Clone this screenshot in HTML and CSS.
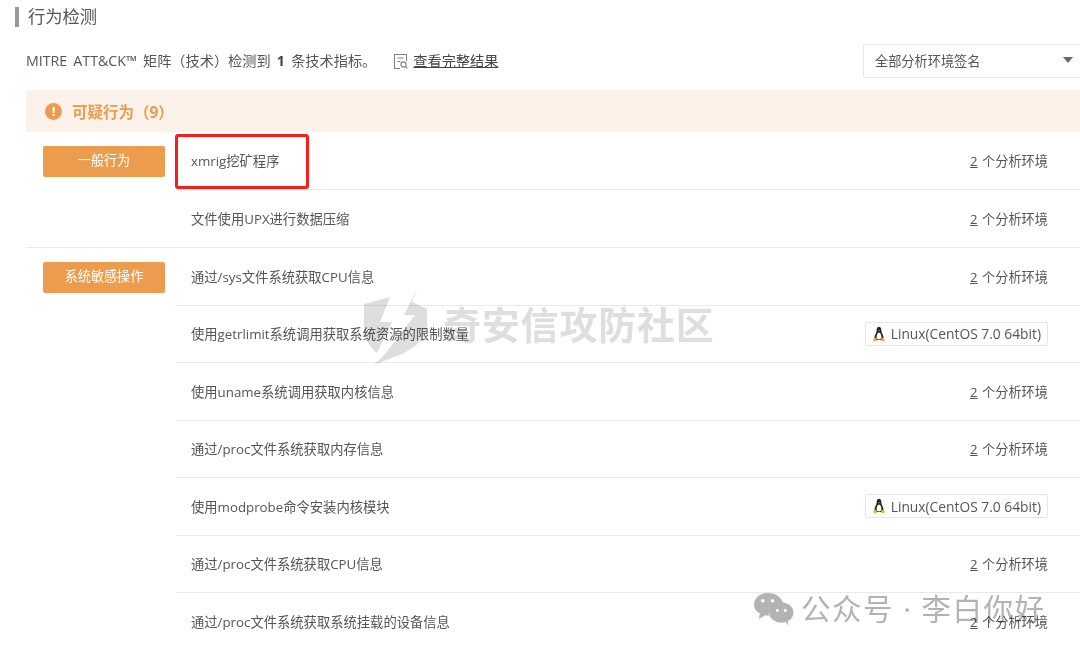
FILE: index.html
```html
<!DOCTYPE html>
<html lang="zh-CN">
<head>
<meta charset="utf-8">
<title>行为检测</title>
<link rel="stylesheet" href="styles.css">
</head>
<body>
<main class="page">
  <h1 class="title">行为检测</h1>
  <div class="summary">
    <p class="summary-text">MITRE ATT&amp;CK™ 矩阵（技术）检测到 <b>1</b> 条技术指标。</p>
    <svg class="doc-icon" viewBox="0 0 16 17" width="16" height="17" fill="none" stroke="#808080" stroke-width="1.100"><path d="M7 15.500H1.500v-14h12V8"/><path d="M4.500 5h6M4.500 8.500h3"/><circle cx="10.500" cy="11.500" r="2.600"/><path d="M12.400 13.400l2 2"/></svg>
    <a class="full-link">查看完整结果</a>
    <div class="select">全部分析环境签名<span class="caret"></span></div>
  </div>
  <div class="banner">
    <span class="alert-icon">!</span>
    <span class="banner-text">可疑行为（9）</span>
  </div>
  <section class="group">
    <div class="tag-cell"><span class="tag">一般行为</span></div>
    <div class="rows">
      <div class="row"><span>xmrig挖矿程序</span><span class="count"><u>2</u> 个分析环境</span></div>
      <div class="row"><span>文件使用UPX进行数据压缩</span><span class="count"><u>2</u> 个分析环境</span></div>
    </div>
  </section>
  <section class="group">
    <div class="tag-cell"><span class="tag">系统敏感操作</span></div>
    <div class="rows">
      <div class="row"><span>通过/sys文件系统获取CPU信息</span><span class="count"><u>2</u> 个分析环境</span></div>
      <div class="row"><span>使用getrlimit系统调用获取系统资源的限制数量</span>
        <span class="os"><svg class="tux" viewBox="0 0 14 16" width="14" height="16"><path d="M7 .8C5 .8 4.600 3 4.600 5 4.600 7 2.500 9 2.500 11.500c0 1 .5 2 1.500 2.500h6c1-.5 1.500-1.500 1.500-2.500C11.500 9 9.400 7 9.400 5 9.400 3 9 .8 7 .8z" fill="#222"/><path d="M7 6.500c-1.500 0-2.500 3-2.500 5 0 1 1 2 2.500 2s2.500-1 2.500-2c0-2-1-5-2.500-5z" fill="#fff"/><path d="M1 13.500l3-2 1.200 3-3 1zM13 13.500l-3-2-1.200 3 3 1zM6 4.300h2L7 5.500z" fill="#f2b01e"/></svg>Linux(CentOS 7.0 64bit)</span></div>
      <div class="row"><span>使用uname系统调用获取内核信息</span><span class="count"><u>2</u> 个分析环境</span></div>
      <div class="row"><span>通过/proc文件系统获取内存信息</span><span class="count"><u>2</u> 个分析环境</span></div>
      <div class="row"><span>使用modprobe命令安装内核模块</span>
        <span class="os"><svg class="tux" viewBox="0 0 14 16" width="14" height="16"><path d="M7 .8C5 .8 4.600 3 4.600 5 4.600 7 2.500 9 2.500 11.500c0 1 .5 2 1.500 2.500h6c1-.5 1.500-1.500 1.500-2.500C11.500 9 9.400 7 9.400 5 9.400 3 9 .8 7 .8z" fill="#222"/><path d="M7 6.500c-1.500 0-2.500 3-2.500 5 0 1 1 2 2.500 2s2.500-1 2.500-2c0-2-1-5-2.500-5z" fill="#fff"/><path d="M1 13.500l3-2 1.200 3-3 1zM13 13.500l-3-2-1.200 3 3 1zM6 4.300h2L7 5.500z" fill="#f2b01e"/></svg>Linux(CentOS 7.0 64bit)</span></div>
      <div class="row"><span>通过/proc文件系统获取CPU信息</span><span class="count"><u>2</u> 个分析环境</span></div>
      <div class="row"><span>通过/proc文件系统获取系统挂载的设备信息</span><span class="count"><u>2</u> 个分析环境</span></div>
    </div>
  </section>
</main>
<div class="highlight"></div>
<div class="wm-qianxin">
  <svg viewBox="0 0 80 90" width="80" height="90"><path d="M9 24L35 17 25 42H37L22 73C14 67 9 56 9 45Z" fill="#dedede"/><path d="M63 7L49 35H60L30 74 19 85 39 77C60 70 72 58 72 44V29L57 22Z" fill="#dedede"/></svg>
  <span>奇安信攻防社区</span>
</div>
<div class="wm-wechat">
  <svg viewBox="0 0 42 36" width="41" height="35"><path d="M15 1C7 1 1 6 1 13c0 4 2 7 6 9l-1 6 6-4c2 .5 2 .6 4 .6 0-8 6-13 15-13C29 5 23 1 15 1z" fill="#b3b3b3"/><ellipse cx="29" cy="21" rx="12.500" ry="10.500" fill="#b3b3b3"/><path d="M33 29l3 6 0-7z" fill="#b3b3b3"/><circle cx="10" cy="9" r="1.800" fill="#fff"/><circle cx="20" cy="9" r="1.800" fill="#fff"/><circle cx="25" cy="19" r="1.500" fill="#fff"/><circle cx="33" cy="19" r="1.500" fill="#fff"/></svg>
  <span>公众号 · 李白你好</span>
</div>
</body>
</html>
```

FILE: styles.css
```css
* { box-sizing: border-box; }
html, body { margin: 0; height: 650px; overflow: hidden; background: #fff; }
body {
  position: relative;
  font-family: "Open Sans", "Noto Sans CJK SC", sans-serif;
  font-size: 13.300px;
  color: #555;
  filter: blur(.3px);
}
.page { padding-left: 26px; }
.title {
  margin: 0 0 0 -11px;
  height: 34px;
  padding-left: 9px;
  border-left: 4px solid #999;
  border-image: linear-gradient(#fff 8px, #999 8px, #999 26px, #fff 26px) 1;
  font-size: 17.300px;
  font-weight: 400;
  line-height: 34px;
  color: #555;
}
.summary {
  display: flex;
  align-items: center;
  height: 34px;
  margin-top: 10px;
  font-size: 14.200px;
}
.summary-text { margin: 0; word-spacing: 2.500px; line-height: 34px; }
.summary-text b { color: #444; }
.doc-icon { margin-left: 17px; margin-right: 4px; }
.full-link { text-decoration: underline; color: #444; line-height: 34px; }
.select {
  display: flex;
  align-items: center;
  justify-content: space-between;
  margin-left: auto;
  width: 217px;
  height: 34px;
  padding: 0 7px 2px 11px;
  border: 1px solid #e6e6e6;
  border-right: 0;
  border-radius: 2px 0 0 2px;
  font-size: 13.200px;
}
.caret {
  width: 0;
  height: 0;
  border-left: 5px solid transparent;
  border-right: 5px solid transparent;
  border-top: 6px solid #666;
}
.banner {
  display: flex;
  align-items: center;
  gap: 10px;
  height: 42px;
  margin-top: 12px;
  padding-left: 19px;
  background: #fdf2e9;
  color: #ec9c4d;
}
.alert-icon {
  width: 17px;
  height: 17px;
  border-radius: 50%;
  background: #ec9c4d;
  color: #fff;
  font-size: 13px;
  font-weight: 700;
  line-height: 17px;
  text-align: center;
}
.banner-text { font-size: 15.500px; font-weight: 700; }
.group { display: flex; border-bottom: 1px solid #e9e9e9; }
.group:last-child { border-bottom: 0; }
.tag-cell { width: 150px; flex: none; padding: 13.500px 0 0 17px; }
.tag {
  display: block;
  width: 122px;
  height: 31px;
  border-radius: 2px;
  background: #ec9c4d;
  color: #fff;
  font-size: 13.100px;
  line-height: 29px;
  text-align: center;
}
.rows { flex: 1; }
.row {
  display: flex;
  align-items: center;
  justify-content: space-between;
  height: 57.500px;
  padding: 0 32px 0 15px;
  border-bottom: 1px solid #e9e9e9;
}
.rows .row:last-child { border-bottom: 0; }
.count { font-size: 13.200px; word-spacing: 1px; }
.os {
  display: flex;
  align-items: center;
  gap: 5px;
  height: 24px;
  padding: 0 6px;
  border: 1px solid #e6e6e6;
  border-radius: 2px;
  font-size: 13.800px;
}
.highlight {
  position: absolute;
  left: 175px;
  top: 134px;
  width: 134px;
  height: 55px;
  border: 3px solid #f5201c;
  border-radius: 3px;
}
.wm-qianxin {
  position: absolute;
  left: 355px;
  top: 280px;
  display: flex;
  align-items: flex-start;
  gap: 8px;
  mix-blend-mode: multiply;
}
.wm-qianxin span {
  margin-top: 15px;
  font-size: 38px;
  font-weight: 700;
  letter-spacing: .8px;
  color: #dedede;
  white-space: nowrap;
}
.wm-wechat {
  position: absolute;
  left: 753px;
  top: 586px;
  display: flex;
  align-items: center;
  gap: 7px;
  mix-blend-mode: multiply;
}
.wm-wechat span {
  padding-bottom: 4px;
  font-size: 29.500px;
  letter-spacing: 1.500px;
  color: #b3b3b3;
  white-space: nowrap;
}
```
